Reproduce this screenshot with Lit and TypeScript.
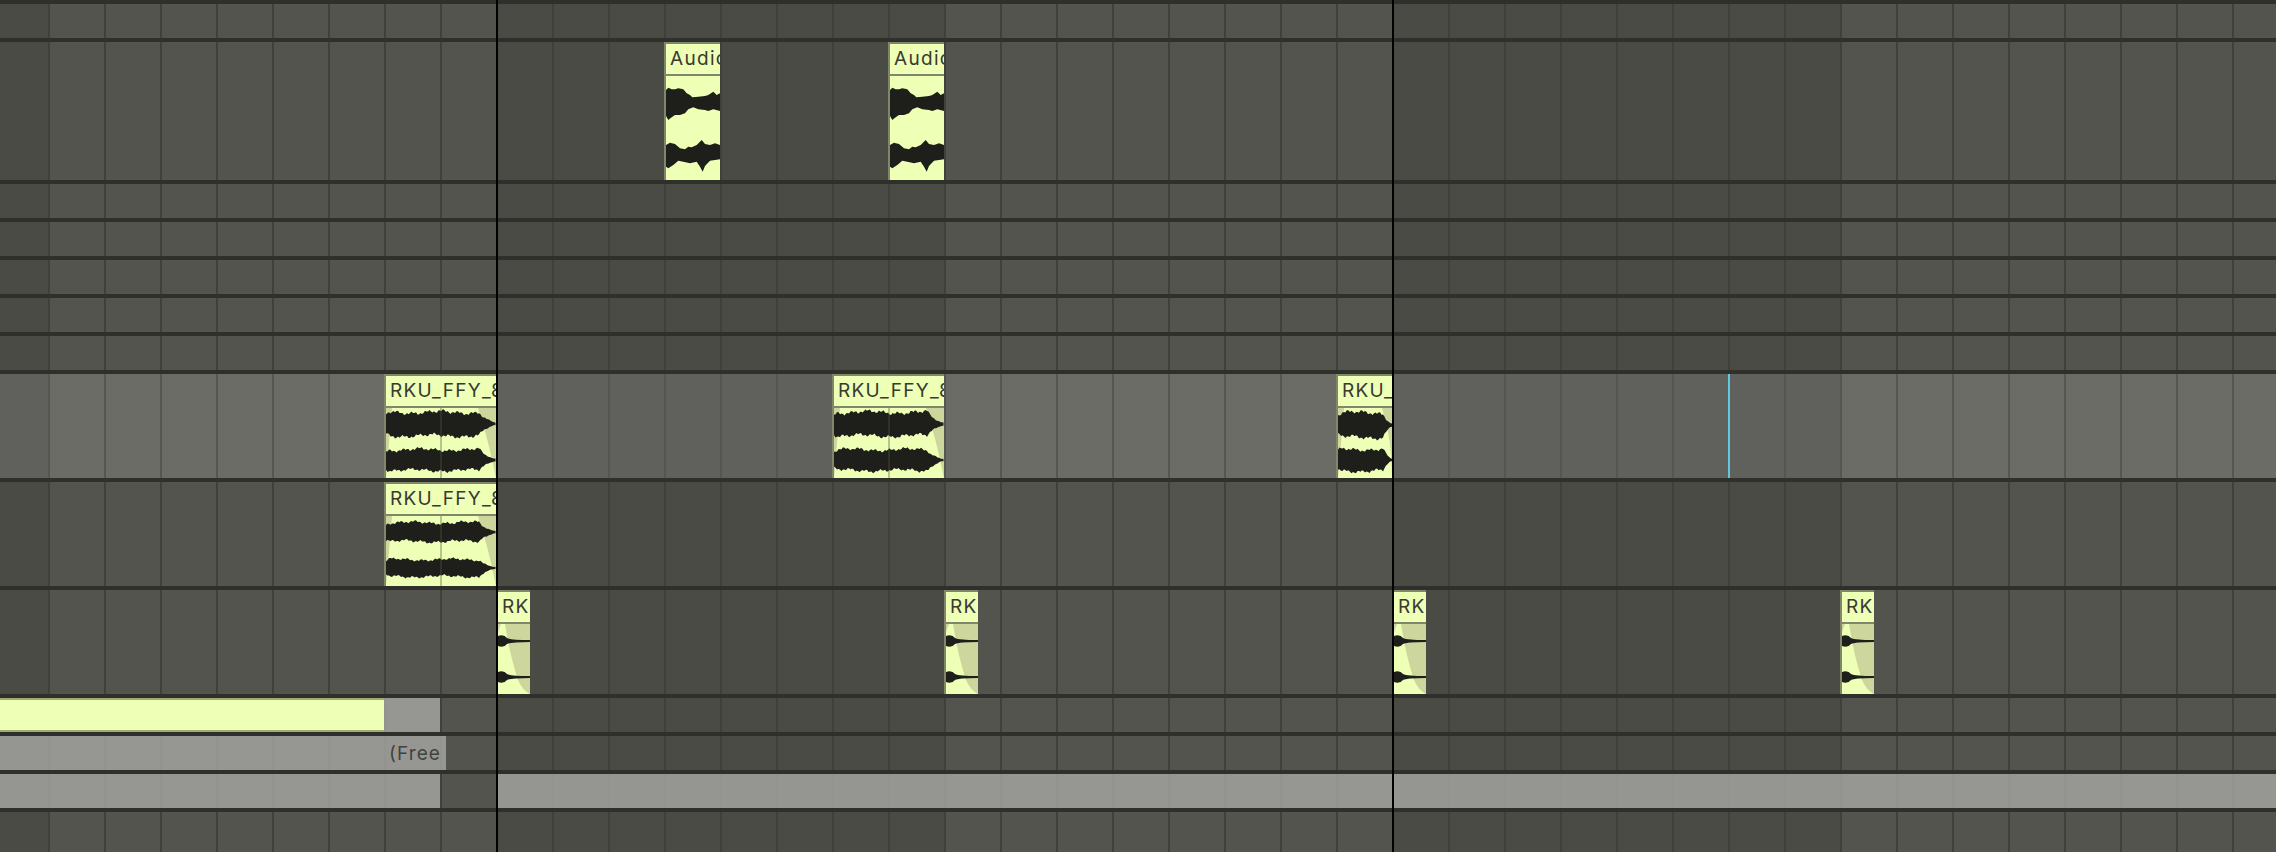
import { LitElement, html, css, svg } from "lit";
import { customElement } from "lit/decorators.js";

const CELL = 56;
const X0 = 48;

type Row = { h: number; sel?: boolean };
const rows: Row[] = [
  { h: 34 }, { h: 138 }, { h: 34 }, { h: 34 }, { h: 34 }, { h: 34 }, { h: 34 },
  { h: 104, sel: true }, { h: 104 }, { h: 104 },
  { h: 34 }, { h: 34 }, { h: 34 }, { h: 40 },
];

/* Traced outline of the Audio clip sample, in clip-relative pixels (3 units = 1px). */
const audioWaves: [number, number][][] = [
  [[0,150],[7,143],[17,148],[27,148],[37,145],[52,148],[62,160],[72,165],[79,172],[97,170],[117,168],[127,165],[142,155],[152,165],[162,160],
   [162,213],[142,208],[127,213],[117,210],[97,208],[82,202],[67,208],[57,220],[42,225],[27,225],[17,232],[7,240],[0,228]],
  [[0,315],[12,308],[27,312],[42,325],[57,328],[67,320],[77,322],[92,315],[107,300],[117,312],[132,315],[147,310],[162,315],
   [162,358],[132,362],[117,378],[110,395],[102,380],[92,365],[72,370],[52,365],[37,362],[22,375],[7,385],[0,380]],
];

function pts(p: [number, number][], dy = 0) {
  return p.map(([x, y]) => `${(x / 3).toFixed(1)},${(y / 3 + dy).toFixed(1)}`).join(" ");
}

function wave(w: number, cy: number, amp: number, seed: number, taper: number) {
  const top: string[] = [];
  const bot: string[] = [];
  const body = w - taper;
  for (let x = 0; x <= w; x += 1.5) {
    const n = (s: number) =>
      Math.sin(x * 0.11 + s) * 0.1 + Math.sin(x * 0.41 + s * 1.7) * 0.09 + Math.sin(x * 1.37 + s * 2.3) * 0.08;
    let env = 1;
    if (x > body) {
      const t = (x - body) / taper;
      env = Math.max(0.13, 1 - Math.pow(t, 0.55) * 0.95);
    }
    const start = Math.min(1, 0.82 + x * 0.05);
    top.push(`${x},${(cy - amp * (0.94 + n(seed)) * env * start).toFixed(1)}`);
    bot.unshift(`${x},${(cy + amp * (0.94 + n(seed + 4)) * env * start).toFixed(1)}`);
  }
  return svg`<polygon class="wf" points="${top.concat(bot).join(" ")}"></polygon>`;
}

@customElement("app-root")
export class AppRoot extends LitElement {
  static styles = css`
    :host { display: block; width: 2276px; height: 852px; overflow: hidden; background: #2f2f2c; font-family: "Inter", "Liberation Sans", sans-serif; }
    .stack { display: flex; flex-direction: column; gap: 4px; padding-top: 4px; position: relative; height: 852px; box-sizing: border-box; }
    .row { position: relative; flex: none; overflow: hidden;
      background: linear-gradient(90deg, #4a4b45 0 48px, #53544e 48px 496px, #4a4b45 496px 944px, #53544e 944px 1392px, #4a4b45 1392px 1840px, #53544e 1840px); }
    .row.sel {
      background: linear-gradient(90deg, #60615c 0 48px, #6b6c66 48px 496px, #60615c 496px 944px, #6b6c66 944px 1392px, #60615c 1392px 1840px, #6b6c66 1840px); }
    .line { position: absolute; top: 0; bottom: 0; width: 2px; background: #40413c; }
    .sel .line { background: #55564f; }
    .clip { position: absolute; top: 0; bottom: 0; background: #eeffb6; overflow: hidden; box-sizing: border-box; z-index: 1;
      border-left: 2px solid #81866a; border-top: 2px solid #81866a; }
    .name { height: 32px; box-sizing: border-box; border-bottom: 2px solid #81866a; font-size: 19px; letter-spacing: 1.3px; line-height: 30px; padding-left: 4px; color: #383a32; white-space: nowrap; overflow: hidden; }
    .clip svg { position: absolute; left: 0; top: 32px; display: block; }
    .wf { fill: #1e1f1b; }
    .fade { fill: #cdd69c; }
    .cl { position: absolute; top: 32px; bottom: 0; width: 2px; background: rgba(80, 85, 60, .35); }
    .block { position: absolute; top: 0; bottom: 0; background: rgba(167, 168, 164, .8); z-index: 1; }
    .yellow { position: absolute; left: 0; top: 0; bottom: 0; width: 384px; background: #eeffb6; border-top: 2px solid #a3ab6f; border-bottom: 2px solid #a3ab6f; box-sizing: border-box; z-index: 2; }
    .free { color: #42433f; font-size: 19px; letter-spacing: 1.1px; line-height: 35px; text-align: right; padding-right: 5px; box-sizing: border-box; white-space: nowrap; overflow: hidden; }
    .marker { position: absolute; top: 0; bottom: 0; width: 2px; background: #5fc9e0; z-index: 2; }
    .bar { position: absolute; top: 0; bottom: 0; width: 2px; background: #000; z-index: 5; }
  `;

  private lines() {
    const out = [];
    for (let i = 0; i < 40; i++) {
      out.push(html`<div class="line" style="left:${X0 + i * CELL}px"></div>`);
    }
    return out;
  }

  private audio(l: number) {
    return html`<div class="clip" style="left:${l}px;width:56px">
      <div class="name">Audio</div>
      <svg width="54" height="104" viewBox="0 0 54 104">
        <polygon class="wf" points="${pts(audioWaves[0], -36)}"></polygon>
        <polygon class="wf" points="${pts(audioWaves[1], -36)}"></polygon>
      </svg>
    </div>`;
  }

  private rku(l: number, w: number, s: number, c1: number, c2: number, a1: number, a2: number) {
    const inner = w - 2;
    const H = 70;
    const long = w > 100;
    const rx = long ? inner - 18 : inner - 10;
    const taper = long ? 16 : 8;
    return html`<div class="clip" style="left:${l}px;width:${w}px">
      <div class="name">RKU_FFY_8</div>
      <svg width="${inner}" height="${H}" viewBox="0 0 ${inner} ${H}">
        <path class="fade" d="M0 0 H6 L0 ${H} Z M${rx} 0 H${inner} V${H} Q${rx + 10} 30 ${rx} 0 Z"></path>
        ${wave(inner, c1, a1, s, taper)}
        ${wave(inner, c2, a2, s + 2, taper)}
      </svg>
      ${long ? html`<div class="cl" style="left:54px"></div>` : ""}
    </div>`;
  }

  private oneShot(l: number) {
    const tail = (cy: number) =>
      svg`<path class="wf" d="M0 ${cy - 5} Q6 ${cy - 7} 9 ${cy - 3} Q13 ${cy - 1} 32 ${cy - 1} V${cy + 1} Q13 ${cy + 1} 9 ${cy + 3} Q6 ${cy + 7} 0 ${cy + 5} Z"></path>`;
    return html`<div class="clip" style="left:${l}px;width:34px">
      <div class="name">RK</div>
      <svg width="32" height="70" viewBox="0 0 32 70">
        <rect class="fade" width="32" height="70"></rect>
        <path d="M3 0 H7 Q12 32 20 56 Q25 67 32 70 H0 V8 Z" fill="#eeffb6"></path>
        ${tail(17)}
        ${tail(53)}
      </svg>
    </div>`;
  }

  render() {
    return html`<div class="stack">
      ${rows.map((r, i) => html`<div class="row ${r.sel ? "sel" : ""}" style="height:${r.h}px">
        ${this.lines()}
        ${i === 1 ? html`${this.audio(664)}${this.audio(888)}` : ""}
        ${i === 7 ? html`
          ${this.rku(384, 112, 2, 16, 52, 12.5, 11)}
          ${this.rku(832, 112, 4, 16, 52, 12.5, 11)}
          ${this.rku(1336, 56, 6, 17, 52, 13, 11.5)}
          <div class="marker" style="left:1728px"></div>` : ""}
        ${i === 8 ? this.rku(384, 112, 5, 16, 52, 10, 9) : ""}
        ${i === 9 ? html`${this.oneShot(496)}${this.oneShot(944)}${this.oneShot(1392)}${this.oneShot(1840)}` : ""}
        ${i === 10 ? html`<div class="block" style="left:0;width:440px"></div><div class="yellow"></div>` : ""}
        ${i === 11 ? html`<div class="block free" style="left:0;width:446px">(Free</div>` : ""}
        ${i === 12 ? html`<div class="block" style="left:0;width:440px"></div><div class="block" style="left:496px;right:0"></div>` : ""}
      </div>`)}
      <div class="bar" style="left:496px"></div>
      <div class="bar" style="left:1392px"></div>
    </div>`;
  }
}
